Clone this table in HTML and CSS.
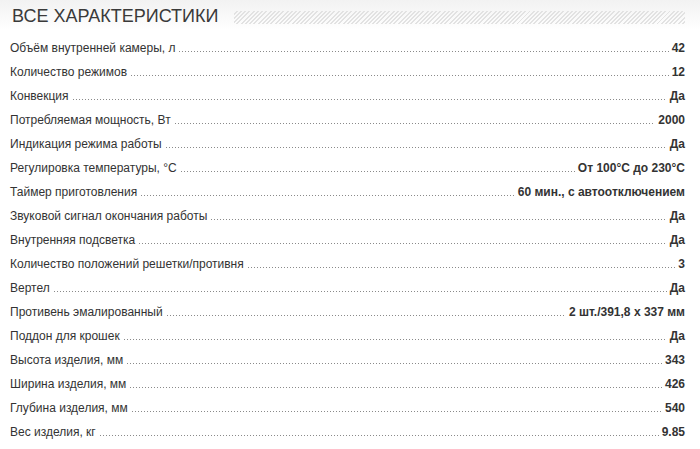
FILE: index.html
```html
<!DOCTYPE html>
<html lang="ru">
<head>
<meta charset="utf-8">
<link rel="stylesheet" href="styles.css">
</head>
<body>
<div class="specs">
  <div class="head">
    <h2 class="title">ВСЕ ХАРАКТЕРИСТИКИ</h2>
    <div class="hatch"></div>
  </div>
  <ul class="list">
    <li class="row"><span class="name">Объём внутренней камеры, л</span><span class="dots"></span><span class="val">42</span></li>
    <li class="row"><span class="name">Количество режимов</span><span class="dots"></span><span class="val">12</span></li>
    <li class="row"><span class="name">Конвекция</span><span class="dots"></span><span class="val">Да</span></li>
    <li class="row"><span class="name">Потребляемая мощность, Вт</span><span class="dots"></span><span class="val">2000</span></li>
    <li class="row"><span class="name">Индикация режима работы</span><span class="dots"></span><span class="val">Да</span></li>
    <li class="row"><span class="name">Регулировка температуры, °C</span><span class="dots"></span><span class="val">От 100°C до 230°C</span></li>
    <li class="row"><span class="name">Таймер приготовления</span><span class="dots"></span><span class="val">60 мин., с автоотключением</span></li>
    <li class="row"><span class="name">Звуковой сигнал окончания работы</span><span class="dots"></span><span class="val">Да</span></li>
    <li class="row"><span class="name">Внутренняя подсветка</span><span class="dots"></span><span class="val">Да</span></li>
    <li class="row"><span class="name">Количество положений решетки/противня</span><span class="dots"></span><span class="val">3</span></li>
    <li class="row"><span class="name">Вертел</span><span class="dots"></span><span class="val">Да</span></li>
    <li class="row"><span class="name">Противень эмалированный</span><span class="dots"></span><span class="val">2 шт./391,8 х 337 мм</span></li>
    <li class="row"><span class="name">Поддон для крошек</span><span class="dots"></span><span class="val">Да</span></li>
    <li class="row"><span class="name">Высота изделия, мм</span><span class="dots"></span><span class="val">343</span></li>
    <li class="row"><span class="name">Ширина изделия, мм</span><span class="dots"></span><span class="val">426</span></li>
    <li class="row"><span class="name">Глубина изделия, мм</span><span class="dots"></span><span class="val">540</span></li>
    <li class="row"><span class="name">Вес изделия, кг</span><span class="dots"></span><span class="val">9.85</span></li>
  </ul>
</div>
</body>
</html>
```
FILE: styles.css
```css
html, body {
  margin: 0;
  padding: 0;
  background: #fff;
}
body {
  font-family: "Liberation Sans", Arial, sans-serif;
  color: #333;
}
.specs {
  width: 700px;
}
.head {
  display: flex;
  align-items: flex-start;
  height: 34px;
  padding: 0 15px 0 12px;
  background: linear-gradient(#f2f2f2, #fff 30px);
}
.title {
  margin: 0;
  padding-top: 6px;
  font-size: 18px;
  font-weight: normal;
  color: #3a3a3a;
  white-space: nowrap;
  line-height: 20px;
}
.hatch {
  flex: 1;
  height: 13px;
  margin: 11px 0 0 16px;
  background: repeating-linear-gradient(135deg, transparent 0 1.6px, #e2e2e2 1.6px 3px);
}
.list {
  list-style: none;
  margin: 0;
  padding: 2px 15px 0 10px;
}
.row {
  display: flex;
  align-items: baseline;
  height: 24px;
  line-height: 24px;
  font-size: 12px;
}
.name {
  color: #333;
  white-space: nowrap;
}
.dots {
  flex: 1;
  margin: 0 3px 0 4px;
  height: 1px;
  background-image: linear-gradient(to right, #8a8a8a 1px, transparent 1px);
  background-size: 3px 1px;
  background-repeat: repeat-x;
}
.val {
  font-weight: bold;
  color: #333;
  white-space: nowrap;
}
```
